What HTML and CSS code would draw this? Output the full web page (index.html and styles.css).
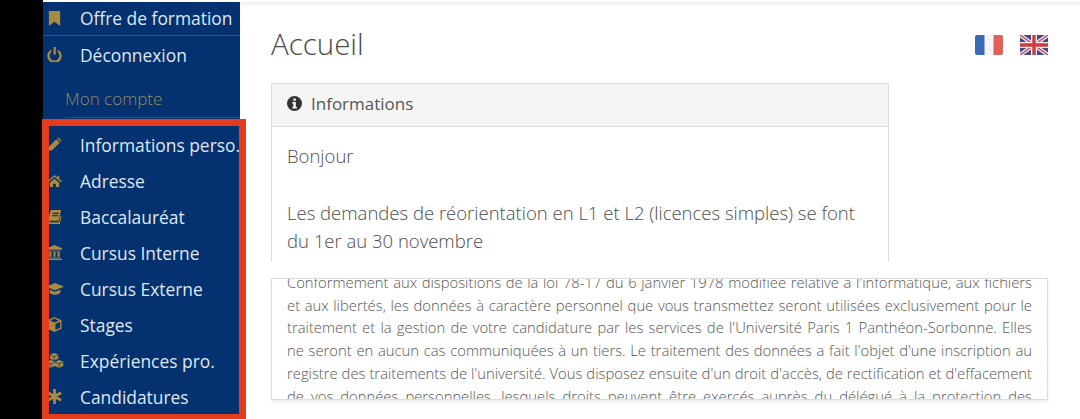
FILE: index.html
```html
<!DOCTYPE html>
<html lang="fr">
<head>
<meta charset="utf-8">
<title>Accueil</title>
<link rel="stylesheet" href="styles.css">
</head>
<body>
<div class="page">
  <div class="rail"></div>
  <nav class="sidebar">
    <a class="item first"><svg class="ico" viewBox="0 0 16 16"><path d="M2 0h12v16l-6-4.500L2 16z"/></svg>Offre de formation</a>
    <a class="item second"><svg class="ico" viewBox="0 0 16 16"><path d="M7 0h2.400v8H7z"/><path d="M4.600 2.600v2.700a5.200 5.200 0 1 0 6.800 0V2.600a7.700 7.700 0 1 1-6.800 0z"/></svg>Déconnexion</a>
    <div class="heading">Mon compte</div>
    <div class="group">
      <a class="item"><svg class="ico" viewBox="0 0 16 16"><path d="M1 15l1-4.500 8-8 3.500 3.500-8 8z"/><path d="M11 1.500l1-1 3.500 3.500-1 1z"/></svg>Informations perso.</a>
      <a class="item"><svg class="ico" viewBox="0 0 16 16"><path d="M8 2L0 9l1 1 7-6 7 6 1-1-3-2.600V3h-2v1.700z"/><path d="M3 10.500L8 6l5 4.500V15H9.500v-3.500h-3V15H3z"/></svg>Adresse</a>
      <a class="item"><svg class="ico" viewBox="0 0 16 16"><path d="M4 1h11l-2.500 11.500H3.200c-.8 0-.9 1.500 0 1.500H13l1.500-7 1 .5L13.800 16H2.500C1 16 .6 14.300 1 12.500zM6 4v1.300h6.300L12.600 4zM5.500 6.500v1.300h6.300l.3-1.300z" fill-rule="evenodd"/></svg>Baccalauréat</a>
      <a class="item"><svg class="ico" viewBox="0 0 16 16"><path d="M8 0l8 3.500V5H0V3.500z"/><path d="M1.500 6h13v.8h-13zM2.500 7.500h2.200v5H2.500zM6.900 7.500h2.200v5H6.900zM11.300 7.500h2.200v5h-2.200zM1 13.300h14V14.500H1zM0 15h16v1H0z"/></svg>Cursus Interne</a>
      <a class="item"><svg class="ico wide" viewBox="0 0 20 16"><path d="M10 2L0 6l10 4 10-4z"/><path d="M4 9.300v3c0 1.500 3 2.700 6 2.700s6-1.200 6-2.700v-3l-6 2.400z"/></svg>Cursus Externe</a>
      <a class="item"><svg class="ico" viewBox="0 0 16 16"><path d="M8 0l7.500 3.500v9L8 16 .5 12.500v-9zM3.500 3.800L8 5.900l4.500-2.100L8 1.700zM9 7.400v6.400l5-2.400V5z" fill-rule="evenodd"/></svg>Stages</a>
      <a class="item"><svg class="ico wide" viewBox="0 0 20 18"><path d="M9 0l5 2v5l-5 2-5-2V2z"/><path d="M5 8.500l5 2v5l-5 2.500-5-2.500v-5zM15 8.500l5 2v5l-5 2.500-5-2.500v-5z"/><path class="cut" d="M4 2.500l5 2 5-2M9 4.500V9M0 11l5 2 5-2M5 13v5M10 11l5 2 5-2M15 13v5"/></svg>Expériences pro.</a>
      <a class="item"><svg class="ico" viewBox="0 0 16 16"><path d="M6.500 0h3v5.400l4.700-2.700 1.500 2.600L11 8l4.700 2.700-1.500 2.600-4.700-2.700V16h-3v-5.400l-4.700 2.700-1.500-2.600L5 8 .3 5.300l1.500-2.600 4.700 2.700z"/></svg>Candidatures</a>
    </div>
    <div class="highlight"></div>
  </nav>
  <main class="main">
    <div class="top">
      <div class="title-row">
        <h1 class="title">Accueil</h1>
        <div class="flags">
          <svg class="flag" viewBox="0 0 28 20"><rect width="28" height="20" rx="2" fill="#f4f4f6"/><path d="M2 0h7.500v20H2a2 2 0 0 1-2-2V2a2 2 0 0 1 2-2z" fill="#3a69b5"/><path d="M18.500 0H26a2 2 0 0 1 2 2v16a2 2 0 0 1-2 2h-7.500z" fill="#e0605a"/></svg>
          <svg class="flag" viewBox="0 0 28 20"><rect width="28" height="20" rx="2" fill="#3d4a86"/><path d="M0 0l28 20M28 0L0 20" stroke="#e8e4ea" stroke-width="4"/><path d="M0 0l28 20M28 0L0 20" stroke="#c9444f" stroke-width="1.400"/><path d="M14 0v20M0 10h28" stroke="#f0ecee" stroke-width="6"/><path d="M14 0v20M0 10h28" stroke="#cf3a40" stroke-width="3.400"/></svg>
        </div>
      </div>
      <section class="panel">
        <header class="panel-head"><svg class="info" viewBox="0 0 16 16"><path fill-rule="evenodd" d="M8 0a8 8 0 1 1 0 16A8 8 0 0 1 8 0zM6.700 2.600v2.500h2.700V2.600zM5.600 6.500v1.500h1.100v3.700H5.600v1.600h5v-1.600H9.400V6.500z"/></svg>Informations</header>
        <div class="panel-body">
          <p class="hello">Bonjour</p>
          <p class="intro">Les demandes de réorientation en L1 et L2 (licences simples) se font du 1er au 30 novembre</p>
        </div>
      </section>
    </div>
    <div class="legal">
      <p class="legal-text">Conformément aux dispositions de la loi 78-17 du 6 janvier 1978 modifiée relative à l'informatique, aux fichiers et aux libertés, les données à caractère personnel que vous transmettez seront utilisées exclusivement pour le traitement et la gestion de votre candidature par les services de l'Université Paris 1 Panthéon-Sorbonne. Elles ne&nbsp;seront en aucun cas communiquées à un tiers. Le traitement des données a fait l'objet d'une inscription au registre des traitements de l'université. Vous disposez ensuite d'un droit d'accès, de rectification et d'effacement de vos données personnelles, lesquels droits peuvent être exercés auprès du délégué à la protection des données de l'université, dans les conditions prévues par la loi.</p>
    </div>
  </main>
</div>
</body>
</html>
```
FILE: styles.css
```css
* { box-sizing: border-box; }
html, body { margin: 0; height: 100%; overflow: hidden; background: #fff; }
body { font-family: "Open Sans", "Liberation Sans", sans-serif; }
.page { display: flex; height: 419px; width: 1080px; padding-top: 2px; position: relative; }
.rail { width: 43px; background: #000; margin-top: -2px; flex: none; }
.sidebar { width: 197px; flex: none; background: #04316f; position: relative; white-space: nowrap; overflow: visible; }
.item { display: flex; align-items: center; height: 36px; padding-left: 37px; color: #dfe8f1; font-size: 17.400px; position: relative; }
.first { height: 34px; padding-bottom: 2px; border-bottom: 1px solid #2d5185; }
.second { height: 38px; padding-bottom: 1px; }
.heading { color: #8f8d62; font-size: 17px; font-weight: 300; height: 44px; padding: 13px 0 0; line-height: 24px; margin: 0 0 9px 22px; border-bottom: 1px solid #2d5185; }
.ico { position: absolute; left: 4px; top: 50%; width: 15px; height: 15px; margin-top: -8px; fill: #a88a40; }
.wide { width: 18px; left: 3px; }
.cut { fill: none; stroke: #04316f; stroke-width: .8; }
.highlight { position: absolute; left: -1px; top: 117px; width: 204px; height: 300px; border-style: solid; border-color: #e33d1e; border-width: 7px 7px 5px 7px; }
.main { flex: 1; min-width: 0; padding: 0 32px 0 31px; box-shadow: inset 0 6px 5px -4px #e8e8e8; }
.top { height: 260px; overflow: hidden; }
.title-row { display: flex; justify-content: space-between; align-items: center; height: 81px; }
.title { margin: 2px 0 0; font-size: 29.500px; font-weight: 300; color: #4a4a4a; line-height: 1; }
.flags { display: flex; gap: 17px; margin-top: 4px; }
.flag { width: 28px; height: 20px; display: block; filter: blur(.5px); }
.panel { width: 618px; border: 1px solid #ddd; height: 240px; }
.panel-head { height: 43px; display: flex; align-items: center; background: #f5f5f5; border-bottom: 1px solid #ddd; padding: 0 0 3px 15px; font-size: 17px; color: #555; }
.info { width: 15px; height: 15px; fill: #333; margin-right: 9px; }
.panel-body { padding: 15px 20px 0 15px; font-size: 18.500px; font-weight: 300; color: #4c4c4c; line-height: 28.500px; }
.panel-body p { margin: 0; }
.hello { margin-bottom: 28px !important; }
.legal { margin-top: 16px; height: 122px; border: 1px solid #ddd; box-shadow: 0 2px 3px rgba(0,0,0,.08); overflow: hidden; padding: 0 15px; }
.legal-text { margin: -8px 0 0; font-size: 14.800px; font-weight: 300; color: #555; line-height: 22.700px; text-align: justify; }
```
